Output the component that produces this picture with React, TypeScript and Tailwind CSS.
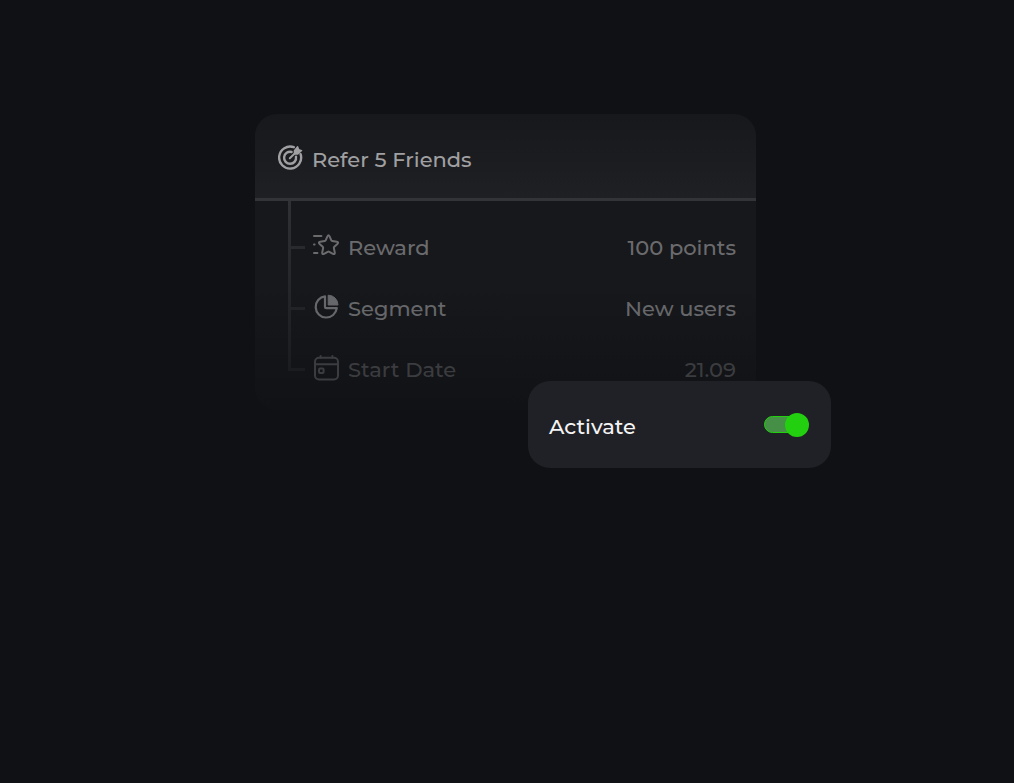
import type { ReactNode } from 'react';

function TargetIcon() {
  return (
    <svg viewBox="0 0 26 26" className="h-[26px] w-[26px] shrink-0" fill="none" stroke="currentColor" strokeWidth="2.4" aria-hidden="true">
      <path d="M15.8 2.2A11 11 0 1 0 22.6 9.2" strokeLinecap="round" />
      <path d="M13.6 7A6 6 0 1 0 18 11.8" strokeLinecap="round" />
      <path d="M11.8 13.2L18.6 6.6" strokeLinecap="round" strokeWidth="2" />
      <path d="M16.4 5.8L19.6 1.8L20.6 4.6L23.6 5.6L19.8 9H16.4Z" fill="currentColor" strokeWidth="1.4" strokeLinejoin="round" />
    </svg>
  );
}

function StarIcon() {
  return (
    <svg viewBox="0 0 28 26" className="h-[26px] w-7 shrink-0" fill="none" stroke="currentColor" strokeWidth="2" strokeLinecap="round" strokeLinejoin="round" aria-hidden="true">
      <path d="M15.4 3.4Q16.5 1.2 17.6 3.4L19.2 7.2Q19.5 7.9 20.3 8L24.8 8.7Q27 9.2 25.4 10.9L22.3 13.8Q21.7 14.4 21.9 15.2L22.8 19.6Q23 21.8 21 20.8L17.3 18.8Q16.5 18.4 15.7 18.8L12 20.8Q10 21.8 10.2 19.6L11.1 15.2Q11.3 14.4 10.7 13.8L7.6 10.9Q6 9.2 8.2 8.7L12.7 8Q13.5 7.9 13.8 7.2Z" />
      <path d="M2 3H9.4M2 11.4H2.6M2 20H5.4" />
    </svg>
  );
}

function PieIcon() {
  return (
    <svg viewBox="0 0 28 26" className="h-[26px] w-7 shrink-0" fill="none" stroke="currentColor" strokeWidth="2.2" strokeLinejoin="round" aria-hidden="true">
      <path d="M13 2.4A10.6 10.6 0 1 0 24.8 14.2H14.2Q13 14.2 13 13Z" />
      <path d="M16.2 1.2A9.8 9.8 0 0 1 26 11H16.2Z" fill="currentColor" strokeWidth="1" />
    </svg>
  );
}

function CalendarIcon() {
  return (
    <svg viewBox="0 0 28 26" className="h-[26px] w-7 shrink-0" fill="none" stroke="currentColor" strokeWidth="2" strokeLinecap="round" strokeLinejoin="round" aria-hidden="true">
      <rect x="3" y="2.8" width="23" height="21.6" rx="4" />
      <path d="M3 9.2H26M8.6 1V2.8M20.4 1V2.8" />
      <rect x="7" y="13.4" width="4.6" height="4.6" rx="1" />
    </svg>
  );
}

type RowProps = {
  icon: ReactNode;
  label: string;
  value: string;
  className: string;
  tick: string;
};

function Row({ icon, label, value, className, tick }: RowProps) {
  return (
    <div className={`flex h-[61px] items-center ${className}`}>
      <span className={`mt-1 h-[3px] w-[14px] shrink-0 ${tick}`} />
      <dt className="ml-[7px] flex items-center gap-2">
        {icon}
        <span className="pt-1">{label}</span>
      </dt>
      <dd className="ml-auto pt-1">{value}</dd>
    </div>
  );
}

export default function App() {
  return (
    <main className="min-h-screen bg-[#101115] pt-[114px] pr-[27px] pb-24 pl-6 font-['Montserrat','Inter',sans-serif] text-[21px] leading-7 font-medium">
      <div className="relative mx-auto max-w-[501px]">
        <section className="overflow-hidden rounded-[22px]">
          <header className="flex h-[87px] items-center gap-2 border-b-[3px] border-[#333438] bg-linear-to-b from-[#17181b] to-[#1f2024] px-[23px] pt-1 text-[#a0a0a2]">
            <TargetIcon />
            <h1 className="pt-1">Refer 5 Friends</h1>
          </header>

          <div className="flex bg-linear-to-b from-[#17181b] from-40% to-[#111216] pr-5 pb-3 pl-[33px]">
            <div className="h-[170px] w-[3px] shrink-0 bg-linear-to-b from-[#303135] to-[#1b1c1f]" />
            <dl className="grow pt-[14px]">
              <Row icon={<StarIcon />} label="Reward" value="100 points" className="text-[#6b6b6e]" tick="bg-[#292a2d]" />
              <Row icon={<PieIcon />} label="Segment" value="New users" className="text-[#66676a]" tick="bg-[#222326]" />
              <Row icon={<CalendarIcon />} label="Start Date" value="21.09" className="text-[#3b3c3f]" tick="bg-[#1b1c1f]" />
            </dl>
          </div>
        </section>

        {/* Floating toggle card over the bottom right corner */}
        <label className="absolute top-[267px] -right-[75px] flex h-[87px] w-[303px] cursor-pointer items-center justify-between rounded-[22px] bg-[#202126] pr-[22px] pl-[21px] text-[#f4f4f5]">
          <span className="pt-1">Activate</span>
          <span className="relative flex h-6 w-[45px] items-center">
            <input
              type="checkbox"
              role="switch"
              defaultChecked
              className="peer h-[17px] w-9 cursor-pointer appearance-none rounded-full border border-[#22d010] bg-[#459046]"
            />
            <span className="pointer-events-none absolute top-0 left-0 h-6 w-6 rounded-full bg-[#8a8b8f] peer-checked:right-0 peer-checked:left-auto peer-checked:bg-[#22d010]" />
          </span>
        </label>
      </div>
    </main>
  );
}
